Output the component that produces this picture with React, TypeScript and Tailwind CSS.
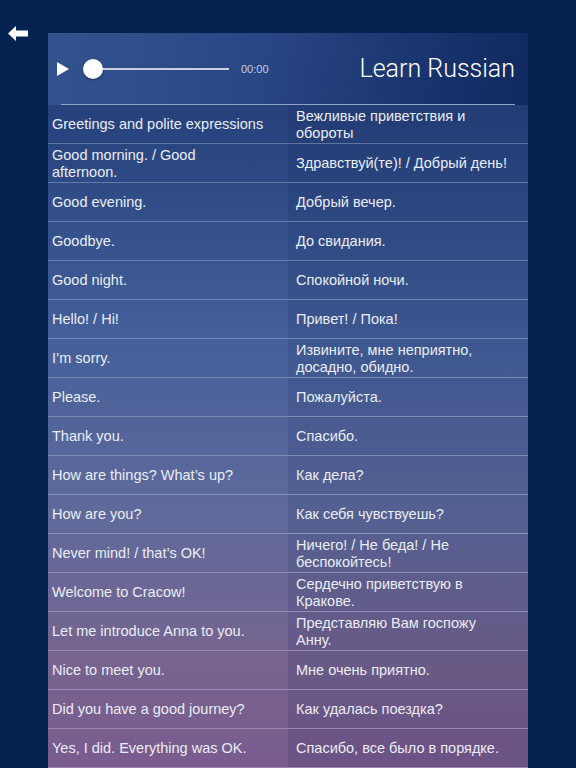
import React from "react";

const rows: [string, string][] = [
  ["Greetings and polite expressions", "Вежливые приветствия и\nобороты"],
  ["Good morning. / Good\nafternoon.", "Здравствуй(те)! / Добрый день!"],
  ["Good evening.", "Добрый вечер."],
  ["Goodbye.", "До свидания."],
  ["Good night.", "Спокойной ночи."],
  ["Hello! / Hi!", "Привет! / Пока!"],
  ["I’m sorry.", "Извините, мне неприятно,\nдосадно, обидно."],
  ["Please.", "Пожалуйста."],
  ["Thank you.", "Спасибо."],
  ["How are things? What’s up?", "Как дела?"],
  ["How are you?", "Как себя чувствуешь?"],
  ["Never mind! / that’s OK!", "Ничего! / Не беда! / Не\nбеспокойтесь!"],
  ["Welcome to Cracow!", "Сердечно приветствую в\nКракове."],
  ["Let me introduce Anna to you.", "Представляю Вам госпожу\nАнну."],
  ["Nice to meet you.", "Мне очень приятно."],
  ["Did you have a good journey?", "Как удалась поездка?"],
  ["Yes, I did. Everything was OK.", "Спасибо, все было в порядке."],
];

export default function App() {
  return (
    <div
      className="relative h-[768px] w-[576px] overflow-hidden bg-[#062250]"
      style={{ fontFamily: '"Liberation Sans", Arial, sans-serif' }}
    >
      <div className="absolute left-[8px] top-[26px]">
        <svg width="21" height="15" viewBox="0 0 21 15">
          <path d="M0 7.5 L8 0 L8 4.5 L20 4.5 L20 10.5 L8 10.5 L8 15 Z" fill="#ffffff" />
        </svg>
      </div>
      <div className="ml-[48px] mt-[33px] w-[480px] flex flex-col bg-[linear-gradient(to_bottom,#1f3a73_0%,#2c4882_18%,#45609a_42%,#5f6a9c_65%,#76648f_85%,#7a5b8e_100%)]">
        {/* header */}
        <div className="flex h-[72px] flex-col bg-[linear-gradient(100deg,#33538f_0%,#284683_45%,#1a3670_75%,#10295f_100%)]">
          <div className="flex h-[70px] items-center pl-[9px] pr-[13px] pt-[2px]">
            <svg width="12" height="14" viewBox="0 0 12 14" className="shrink-0">
              <path d="M0 0 L12 7 L0 14 Z" fill="#ffffff" />
            </svg>
            <div className="ml-[14px] flex items-center">
              <div className="h-[20px] w-[20px] rounded-full bg-white shadow-[0_1px_2px_rgba(0,0,0,0.4)]" />
              <div className="h-[2px] w-[126px] bg-[#c9cfdc]" />
            </div>
            <div className="ml-[12px] text-[11px] text-[#c4cce0]">00:00</div>
            <div
              className="ml-auto text-[25px] font-light text-white"
              style={{ fontFamily: 'Roboto, "Liberation Sans", sans-serif' }}
            >
              Learn Russian
            </div>
          </div>
          <div className="mx-[13px] mt-px h-px bg-[#8ea2cc]" />
        </div>
        {/* rows */}
        <div className="flex flex-col">
          {rows.map(([en, ru], i) => (
            <div key={i} className="flex h-[39px] border-b border-white/25">
              <div className="flex w-[240px] items-center whitespace-pre-line pl-[4px] pr-[8px] pt-px text-[14.5px] leading-[17px] text-[#e9edf5]">
                {en}
              </div>
              <div className="flex w-[240px] items-center whitespace-pre-line bg-[#0b1b4a]/12 pl-[8px] pr-[8px] pt-px text-[14.5px] leading-[17px] text-[#e9edf5]">
                {ru}
              </div>
            </div>
          ))}
        </div>
      </div>
    </div>
  );
}
